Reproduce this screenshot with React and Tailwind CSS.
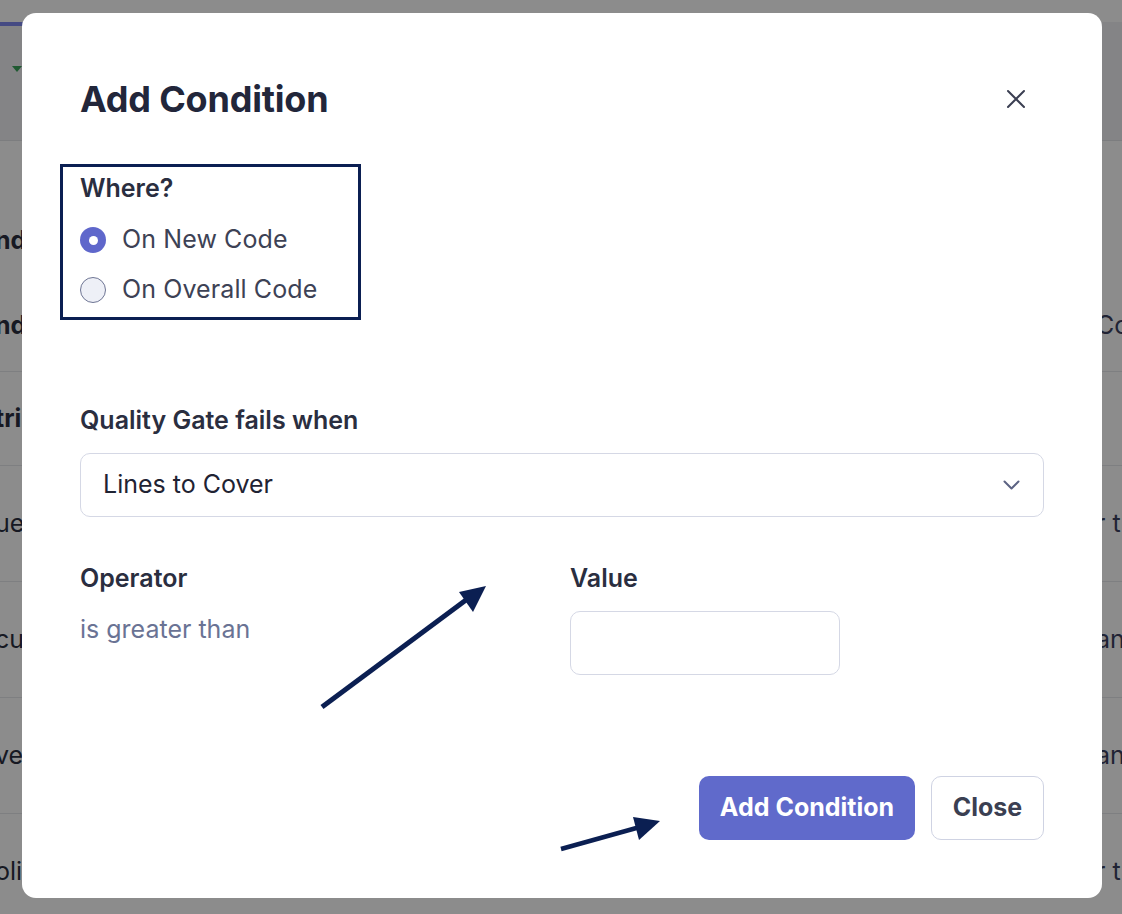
import React from "react";

const font = { fontFamily: "Inter, 'Noto Sans', sans-serif" };

function BgRow({ h, left, right, bold, border = true }) {
  return (
    <div
      className={`flex items-center ${border ? "border-b border-[#e6e7ec]" : ""}`}
      style={{ height: h }}
    >
      <div className={`w-[1096px] shrink-0 overflow-hidden whitespace-nowrap text-[25px] text-[#2b2f40] ${bold ? "font-bold" : ""}`}>
        <span className="-ml-[5px]">{left}</span>
      </div>
      <div className="whitespace-nowrap text-[25px] text-[#3b4060]">{right}</div>
    </div>
  );
}

export default function App() {
  return (
    <div className="relative w-[1122px] h-[914px] overflow-hidden bg-white" style={font}>
      {/* background page */}
      <div className="flex flex-col">
        <div className="h-[22px] bg-white" />
        <div className="flex h-[4px]">
          <div className="w-[60px] bg-[#7f88ee]" />
          <div className="flex-1 bg-[#f0f1f4]" />
        </div>
        <div className="h-[115px] bg-[#f0f1f4] border-b border-[#e2e3e8] pl-[12px] pt-[40px]">
          <div className="w-0 h-0 border-l-[5px] border-r-[5px] border-t-[6px] border-l-transparent border-r-transparent border-t-[#3aa35a]" />
        </div>
        <div className="h-[231px] border-b border-[#e6e7ec] flex flex-col">
          <div className="h-[84px]" />
          <div className="h-[32px] flex items-center w-[1096px] overflow-hidden whitespace-nowrap text-[25px] font-bold text-[#2b2f40]">
            <span className="-ml-[5px]">nd</span>
          </div>
          <div className="h-[53px]" />
          <div className="h-[32px] flex items-center">
            <div className="w-[1096px] shrink-0 overflow-hidden whitespace-nowrap text-[25px] font-bold text-[#2b2f40]">
              <span className="-ml-[5px]">nd</span>
            </div>
            <div className="whitespace-nowrap text-[25px] text-[#3b4060]">Co</div>
          </div>
        </div>
        <BgRow h={94} left="tri" right="." bold />
        <BgRow h={116} left="ue" right="r t" />
        <BgRow h={116} left="cu" right="an" />
        <BgRow h={116} left="ve" right="an" />
        <BgRow h={116} left="oli" right="r t" border={false} />
      </div>

      {/* overlay */}
      <div className="absolute inset-0 bg-black/45" />

      {/* modal */}
      <div className="absolute left-[22px] top-[13px] w-[1080px] h-[885px] rounded-[14px] bg-white px-[58px] pt-[64px] pb-[58px] flex flex-col">
        <div className="flex items-center justify-between h-[44px]">
          <h2 className="text-[36px] leading-[44px] font-bold text-[#22263a] tracking-[-0.2px]">Add Condition</h2>
          <button className="w-[36px] h-[36px] mr-[10px] flex items-center justify-center">
            <svg width="20" height="20" viewBox="0 0 20 20" fill="none" stroke="#3b3f52" strokeWidth="2" strokeLinecap="round">
              <path d="M2 2L18 18M18 2L2 18" />
            </svg>
          </button>
        </div>

        <div className="mt-[43px] -ml-[20px] w-[301px] border-[3px] border-[#0b1f52] pl-[17px] pt-[6px] pb-[7px]">
          <div className="text-[25px] leading-[30px] font-semibold text-[#2a2e40]">Where?</div>
          <div className="mt-[17px] flex flex-col gap-[10px]">
            <label className="flex items-center gap-[16px] h-[40px]">
              <span className="w-[26px] h-[26px] rounded-full bg-[#5f67cb] flex items-center justify-center">
                <span className="w-[9px] h-[9px] rounded-full bg-white" />
              </span>
              <span className="text-[25px] text-[#3d4255] tracking-[0.1px]">On New Code</span>
            </label>
            <label className="flex items-center gap-[16px] h-[40px]">
              <span className="w-[26px] h-[26px] rounded-full bg-[#eef0f7] border border-[#6e7594]" />
              <span className="text-[25px] text-[#3d4255] tracking-[0.1px]">On Overall Code</span>
            </label>
          </div>
        </div>

        <div className="mt-[85px] text-[25px] leading-[30px] font-semibold text-[#2a2e40]">Quality Gate fails when</div>
        <div className="mt-[18px] h-[64px] rounded-[10px] border border-[#d5d8e5] pl-[22px] pr-[23px] flex items-center justify-between">
          <span className="text-[25px] text-[#1f2333]">Lines to Cover</span>
          <svg width="17" height="10" viewBox="0 0 17 10" fill="none" stroke="#5c6383" strokeWidth="2" strokeLinecap="round" strokeLinejoin="round">
            <path d="M1.5 1.5L8.5 8.5L15.5 1.5" />
          </svg>
        </div>

        <div className="mt-[46px] grid grid-cols-2 gap-4">
          <div>
            <div className="text-[25px] leading-[30px] font-semibold text-[#2a2e40]">Operator</div>
            <div className="mt-[21px] text-[25px] leading-[30px] text-[#6a7394]">is greater than</div>
          </div>
          <div>
            <div className="text-[25px] leading-[30px] font-semibold text-[#2a2e40]">Value</div>
            <input className="mt-[18px] w-[270px] h-[64px] rounded-[10px] border border-[#d5d8e5] px-[16px] text-[25px] outline-none" />
          </div>
        </div>

        <div className="mt-auto flex justify-end gap-[16px]">
          <button className="w-[216px] h-[64px] rounded-[10px] bg-[#606acb] text-white text-[25px] font-bold">Add Condition</button>
          <button className="w-[113px] h-[64px] rounded-[10px] border border-[#cfd3e3] bg-white text-[#3b3f52] text-[25px] font-bold">Close</button>
        </div>
      </div>

      {/* annotation arrows */}
      <svg className="absolute inset-0 pointer-events-none" width="1122" height="914">
        <line x1="322" y1="707" x2="470" y2="597" stroke="#0b1f52" strokeWidth="5" />
        <polygon points="486,586 459,592 473,612" fill="#0b1f52" />
        <line x1="561" y1="849" x2="640" y2="827" stroke="#0b1f52" strokeWidth="4.5" />
        <polygon points="660,821 633,817 639,840" fill="#0b1f52" />
      </svg>
    </div>
  );
}
